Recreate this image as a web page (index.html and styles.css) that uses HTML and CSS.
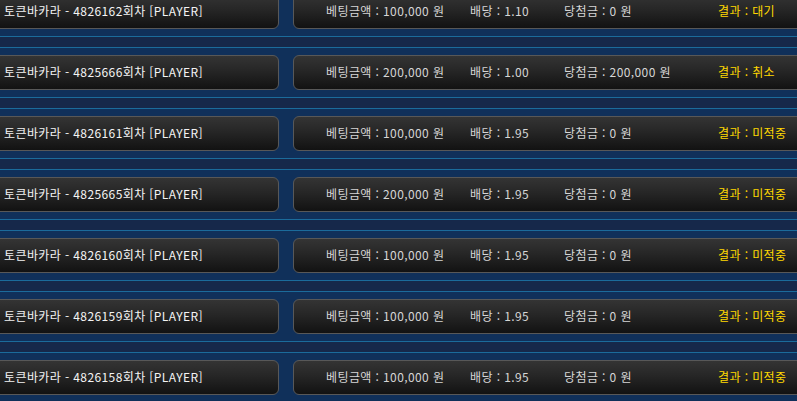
FILE: index.html
```html
<!DOCTYPE html>
<html lang="ko">
<head>
    <meta charset="UTF-8">
    <meta name="viewport" content="width=device-width, initial-scale=1.0">
    <title>베팅내역</title>
    <link rel="stylesheet" href="styles.css">
</head>
<body>
    <div class="list">
        <!-- 회차별 베팅 내역 -->
        <div class="row">
            <div class="game">토큰바카라 - 4826162회차 [PLAYER]</div>
            <div class="info">
                <span>베팅금액 : 100,000 원</span>
                <span>배당 : 1.10</span>
                <span>당첨금 : 0 원</span>
                <span class="result">결과 : 대기</span>
            </div>
        </div>
        <div class="row">
            <div class="game">토큰바카라 - 4825666회차 [PLAYER]</div>
            <div class="info">
                <span>베팅금액 : 200,000 원</span>
                <span>배당 : 1.00</span>
                <span>당첨금 : 200,000 원</span>
                <span class="result">결과 : 취소</span>
            </div>
        </div>
        <div class="row">
            <div class="game">토큰바카라 - 4826161회차 [PLAYER]</div>
            <div class="info">
                <span>베팅금액 : 100,000 원</span>
                <span>배당 : 1.95</span>
                <span>당첨금 : 0 원</span>
                <span class="result">결과 : 미적중</span>
            </div>
        </div>
        <div class="row">
            <div class="game">토큰바카라 - 4825665회차 [PLAYER]</div>
            <div class="info">
                <span>베팅금액 : 200,000 원</span>
                <span>배당 : 1.95</span>
                <span>당첨금 : 0 원</span>
                <span class="result">결과 : 미적중</span>
            </div>
        </div>
        <div class="row">
            <div class="game">토큰바카라 - 4826160회차 [PLAYER]</div>
            <div class="info">
                <span>베팅금액 : 100,000 원</span>
                <span>배당 : 1.95</span>
                <span>당첨금 : 0 원</span>
                <span class="result">결과 : 미적중</span>
            </div>
        </div>
        <div class="row">
            <div class="game">토큰바카라 - 4826159회차 [PLAYER]</div>
            <div class="info">
                <span>베팅금액 : 100,000 원</span>
                <span>배당 : 1.95</span>
                <span>당첨금 : 0 원</span>
                <span class="result">결과 : 미적중</span>
            </div>
        </div>
        <div class="row">
            <div class="game">토큰바카라 - 4826158회차 [PLAYER]</div>
            <div class="info">
                <span>베팅금액 : 100,000 원</span>
                <span>배당 : 1.95</span>
                <span>당첨금 : 0 원</span>
                <span class="result">결과 : 미적중</span>
            </div>
        </div>
    </div>
</body>
</html>
```

FILE: styles.css
```css
html, body {
    margin: 0;
    padding: 0;
    height: 100%;
    overflow: hidden;
}
body {
    font-family: "Noto Sans CJK KR", "DejaVu Sans", sans-serif;
    font-size: 12px;
    letter-spacing: 0.4px;
    background-color: #10305a;
    background-image: linear-gradient(to bottom,
        #10305a 0, #10305a 42px,
        #1b6b9b 42px, #1b6b9b 43px,
        #16284a 43px, #16284a 53px,
        #1b6b9b 53px, #1b6b9b 54px,
        #10305a 54px, #10305a 61px);
    background-size: 100% 61px;
    background-position: 0 -6px;
}
.list {
    margin-top: -6px;
}
.row {
    display: flex;
    gap: 14px;
    height: 35px;
    margin-bottom: 26px;
}
.game, .info {
    box-sizing: border-box;
    height: 35px;
    line-height: 32px;
    border: 1px solid #585858;
    border-radius: 6px;
    background: linear-gradient(to bottom, #343434 0%, #262626 45%, #121212 100%);
    white-space: nowrap;
}
.game {
    flex: none;
    width: 291px;
    margin-left: -12px;
    padding-left: 15px;
    color: #f4f4f4;
}
.info {
    flex: none;
    width: 540px;
    padding-left: 32px;
    color: #d6d6d6;
    display: grid;
    grid-template-columns: 144px 94px 154px auto;
}
.result {
    color: #ffd800;
}
```
